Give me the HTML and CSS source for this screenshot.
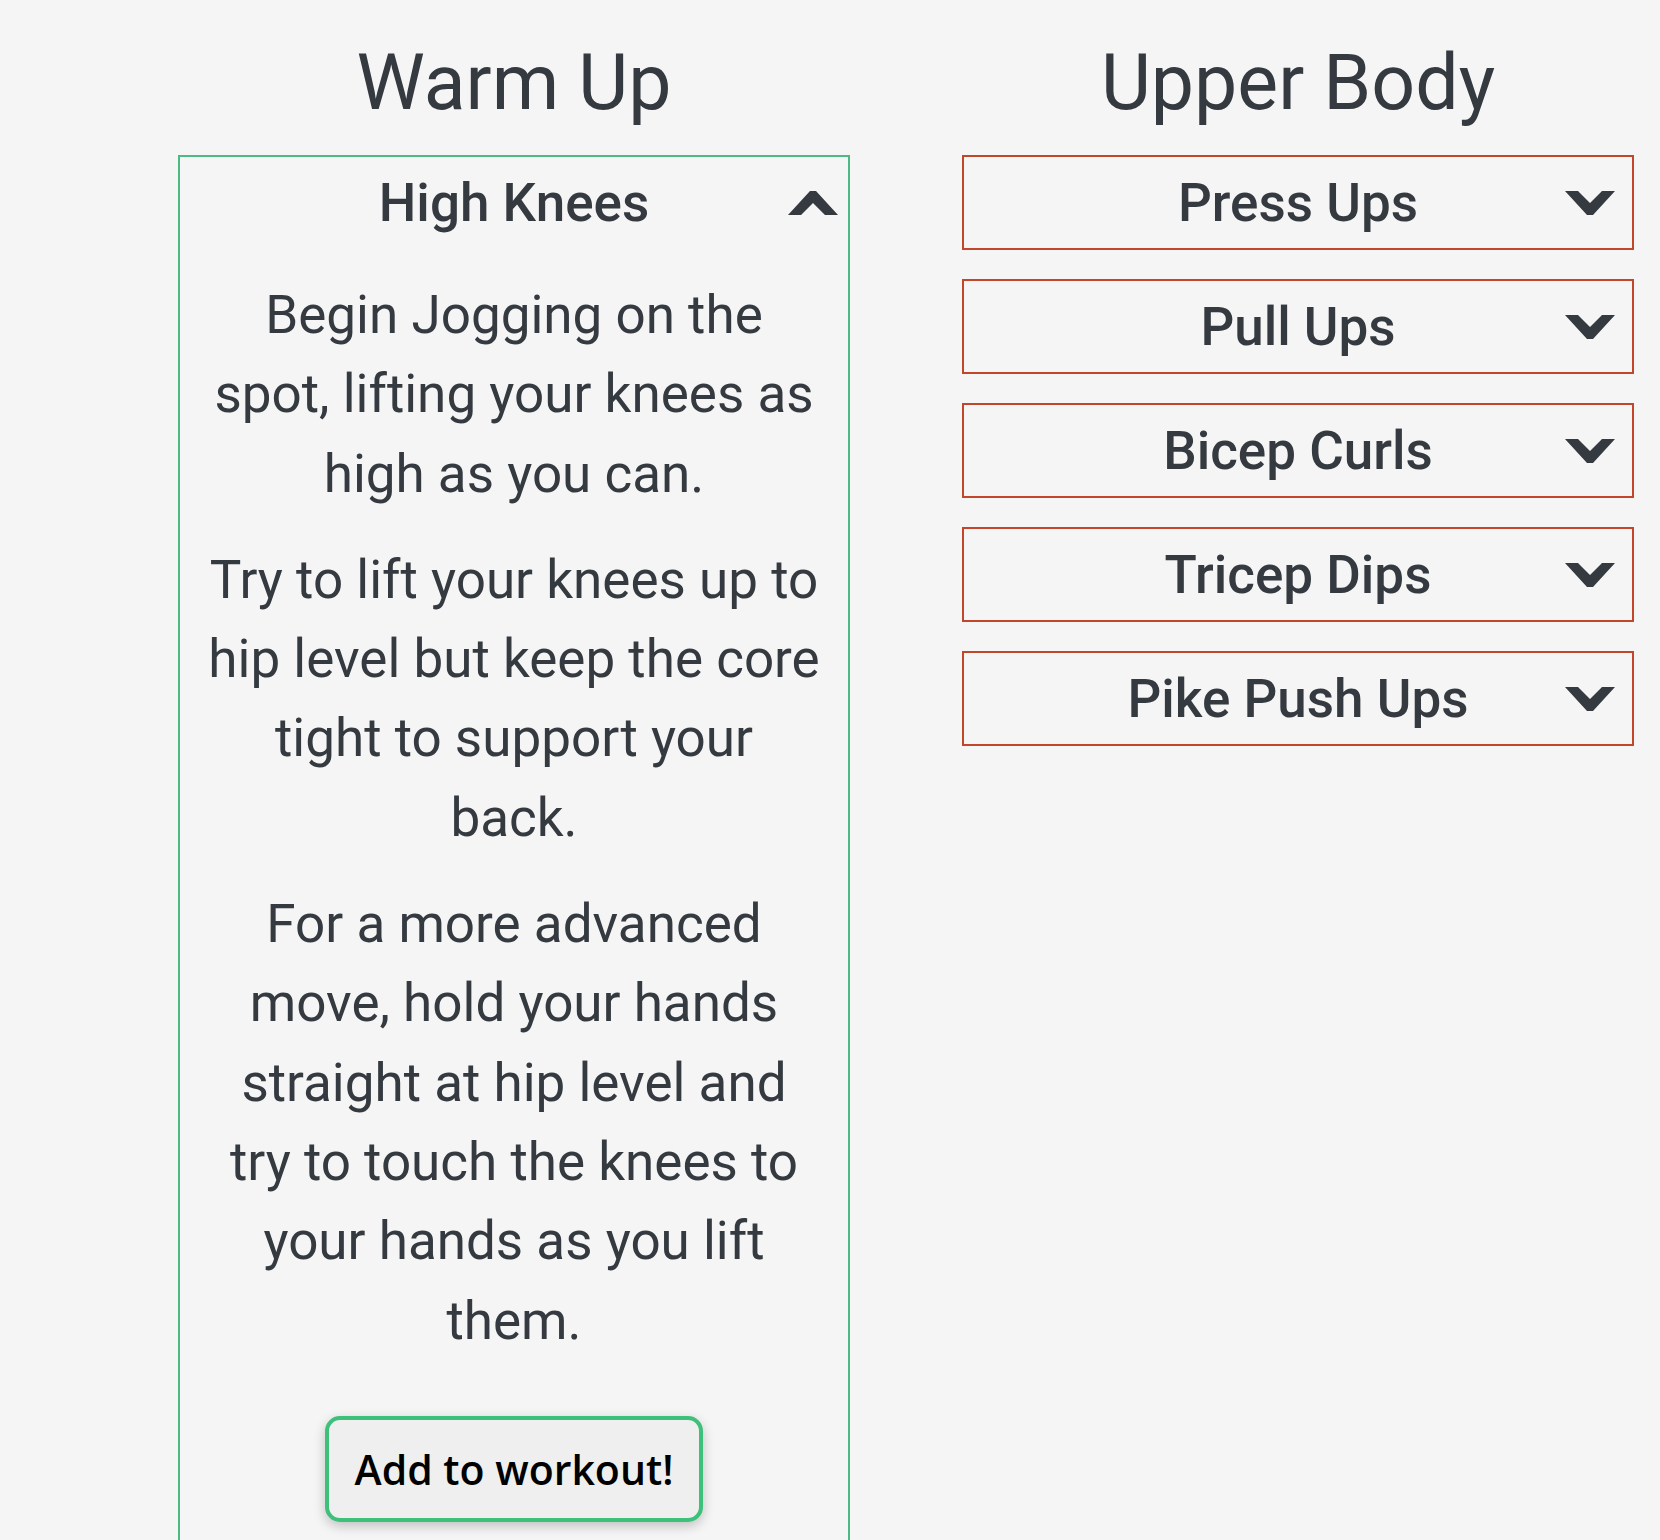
FILE: index.html
```html
<!DOCTYPE html>
<html lang="en">
<head>
<meta charset="utf-8">
<title>Workout</title>
<link rel="stylesheet" href="styles.css">
</head>
<body>
<div class="page">
  <div class="columns">
    <section class="column">
      <h2 class="col-title">Warm Up</h2>
      <div class="card open">
        <div class="acc-head">
          <span class="acc-name">High Knees</span>
          <svg class="chev chev-up" width="50" height="24" viewBox="0 0 50 24"><polygon points="0,24 13,24 25,12 37,24 50,24 28,0 22,0" fill="#343a40"/></svg>
        </div>
        <div class="card-body">
          <p>Begin Jogging on the spot, lifting your knees as high as you can.</p>
          <p>Try to lift your knees up to hip level but keep the core tight to support your back.</p>
          <p>For a more advanced move, hold your hands straight at hip level and try to touch the knees to your hands as you lift them.</p>
          <div class="btn-wrap"><button class="add-btn" type="button">Add to workout!</button></div>
        </div>
      </div>
    </section>
    <section class="column">
      <h2 class="col-title">Upper Body</h2>
      <div class="list">
        <div class="card closed"><div class="acc-head"><span class="acc-name">Press Ups</span><svg class="chev chev-down" width="50" height="24" viewBox="0 0 50 24"><polygon points="0,0 13,0 25,12 37,0 50,0 28,24 22,24" fill="#343a40"/></svg></div></div>
        <div class="card closed"><div class="acc-head"><span class="acc-name">Pull Ups</span><svg class="chev chev-down" width="50" height="24" viewBox="0 0 50 24"><polygon points="0,0 13,0 25,12 37,0 50,0 28,24 22,24" fill="#343a40"/></svg></div></div>
        <div class="card closed"><div class="acc-head"><span class="acc-name">Bicep Curls</span><svg class="chev chev-down" width="50" height="24" viewBox="0 0 50 24"><polygon points="0,0 13,0 25,12 37,0 50,0 28,24 22,24" fill="#343a40"/></svg></div></div>
        <div class="card closed"><div class="acc-head"><span class="acc-name">Tricep Dips</span><svg class="chev chev-down" width="50" height="24" viewBox="0 0 50 24"><polygon points="0,0 13,0 25,12 37,0 50,0 28,24 22,24" fill="#343a40"/></svg></div></div>
        <div class="card closed"><div class="acc-head"><span class="acc-name">Pike Push Ups</span><svg class="chev chev-down" width="50" height="24" viewBox="0 0 50 24"><polygon points="0,0 13,0 25,12 37,0 50,0 28,24 22,24" fill="#343a40"/></svg></div></div>
      </div>
    </section>
  </div>
</div>
</body>
</html>
```
FILE: styles.css
```css
html, body {
  margin: 0;
  padding: 0;
  background: #f5f5f5;
}
body {
  font-family: Roboto, "Liberation Sans", sans-serif;
  color: #343a40;
}
.page {
  height: 1540px;
  overflow: hidden;
}
.columns {
  display: flex;
  gap: 112px;
  padding-left: 178px;
  padding-top: 36px;
}
.column {
  width: 672px;
  display: flex;
  flex-direction: column;
}
.col-title {
  margin: 0 0 25px;
  font-size: 77px;
  font-weight: 400;
  line-height: 94px;
  text-align: center;
}
.list {
  display: flex;
  flex-direction: column;
  gap: 29px;
}
.card {
  border: 2px solid #c2472a;
}
.card.open {
  border-color: #4cba82;
  padding-bottom: 60px;
}
.acc-head {
  position: relative;
  height: 91px;
  display: flex;
  align-items: center;
  justify-content: center;
  font-size: 53px;
  font-weight: 500;
}
.chev {
  position: absolute;
  top: 50%;
  margin-top: -12px;
}
.chev-down {
  right: 17px;
}
.chev-up {
  right: 10px;
}
.card-body {
  padding: 28px 28px 0;
  text-align: center;
  font-size: 53px;
  line-height: 79.3px;
}
.card-body p {
  margin: 0 0 27px;
}
.btn-wrap {
  margin-top: 55px;
  display: flex;
  justify-content: center;
}
.add-btn {
  width: 378px;
  height: 106px;
  box-sizing: border-box;
  border: 4px solid #3cc07a;
  border-radius: 15px;
  background: #efefef;
  box-shadow: 0 4px 12px rgba(0, 0, 0, 0.22);
  color: #000;
  font-family: "Open Sans", "Noto Sans", sans-serif;
  font-size: 41px;
  font-weight: 600;
  padding: 0;
}
```
